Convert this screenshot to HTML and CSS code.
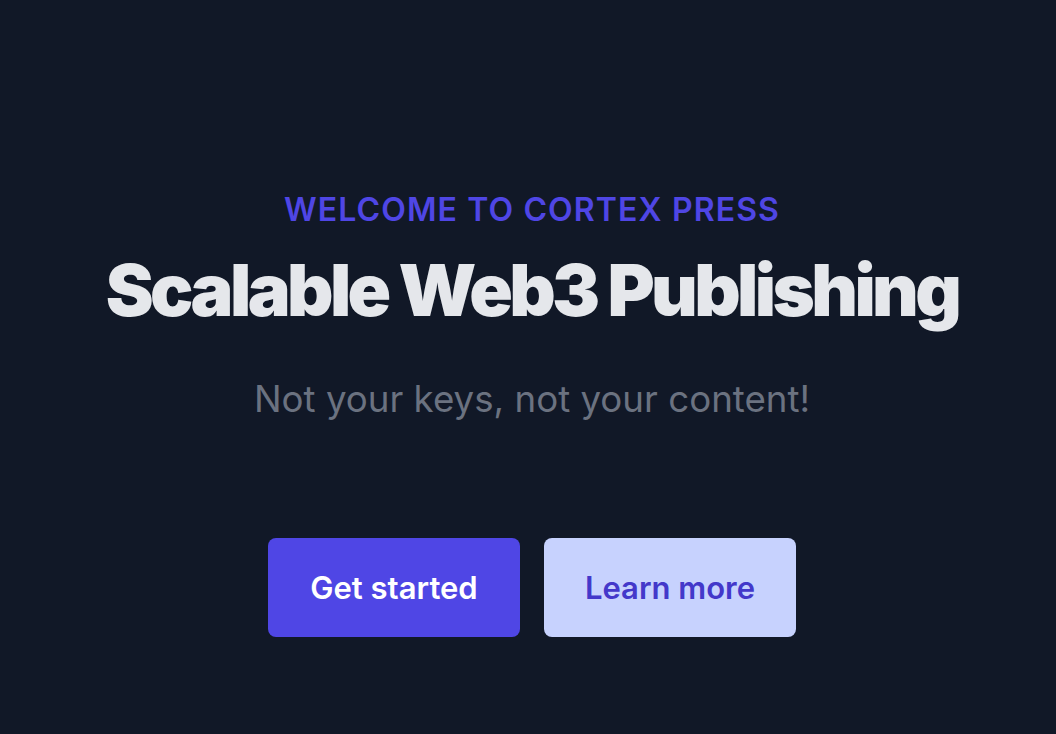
FILE: index.html
```html
<!DOCTYPE html>
<html lang="en">
<head>
<meta charset="utf-8">
<title>Cortex Press</title>
<link rel="stylesheet" href="styles.css">
</head>
<body>
<main class="hero">
  <p class="eyebrow">Welcome to Cortex Press</p>
  <h1 class="title">Scalable Web3 Publishing</h1>
  <p class="subtitle">Not your keys, not your content!</p>
  <div class="actions">
    <a class="btn btn-primary" href="#">Get started</a>
    <a class="btn btn-secondary" href="#">Learn more</a>
  </div>
</main>
</body>
</html>
```
FILE: styles.css
```css
html, body {
  margin: 0;
  padding: 0;
  background: #111827;
  height: 100%;
}
body {
  font-family: Inter, "Noto Sans", sans-serif;
}
.hero {
  display: flex;
  flex-direction: column;
  align-items: center;
  padding-top: 190px;
  padding-left: 8px;
}
.eyebrow {
  margin: 0;
  color: #4f46e5;
  font-size: 32px;
  font-weight: 600;
  letter-spacing: 0.035em;
  text-transform: uppercase;
  line-height: 40px;
}
.title {
  margin: 24px 0 0;
  color: #e5e7eb;
  font-size: 72px;
  font-weight: 900;
  letter-spacing: -0.05em;
  line-height: 1;
}
.subtitle {
  margin: 53px 0 0;
  color: #6b7280;
  font-size: 36.7px;
  line-height: 40px;
}
.actions {
  display: flex;
  gap: 24px;
  margin-top: 119px;
}
.btn {
  display: flex;
  align-items: center;
  justify-content: center;
  width: 252px;
  height: 99px;
  border-radius: 8px;
  font-size: 31px;
  font-weight: 600;
  text-decoration: none;
}
.btn-primary {
  background: #4f46e5;
  color: #ffffff;
}
.btn-secondary {
  background: #c7d2fe;
  color: #4338ca;
}
```
